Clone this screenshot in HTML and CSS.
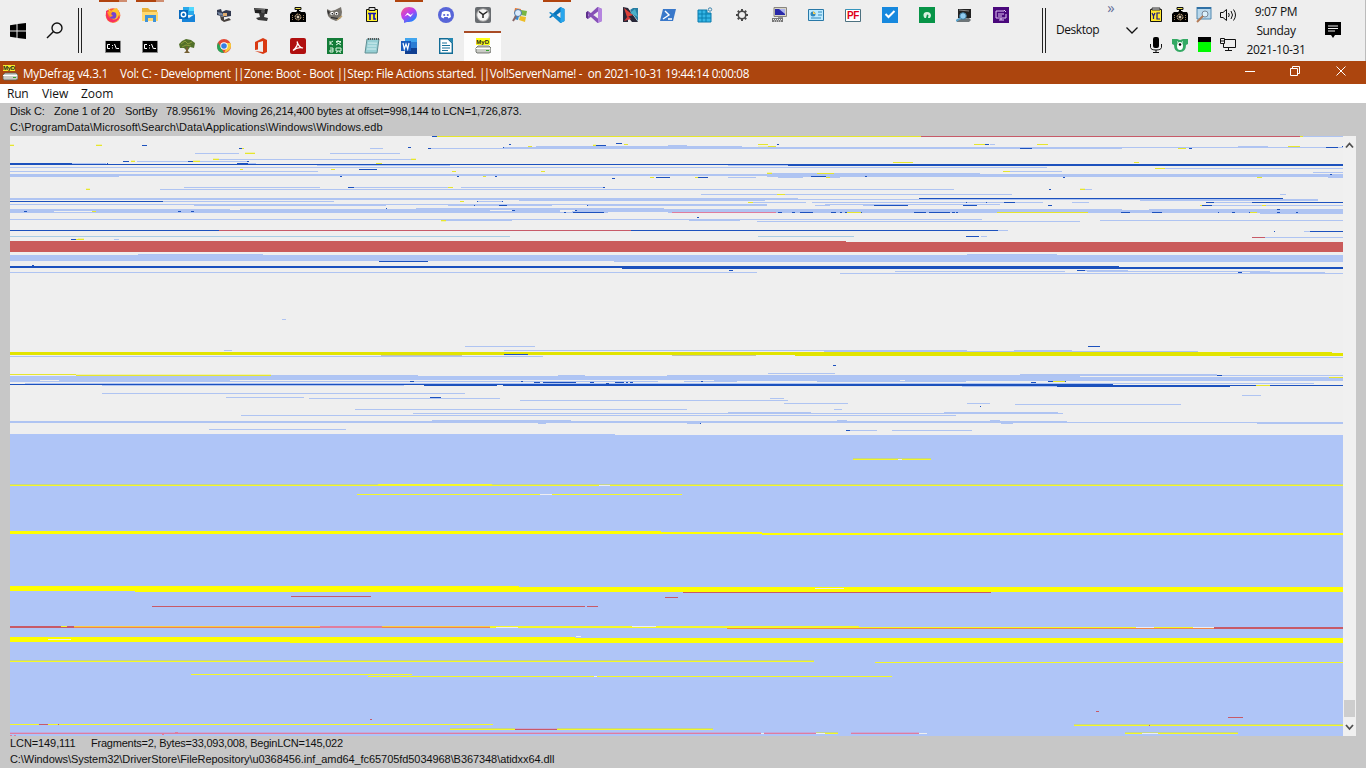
FILE: index.html
```html
<!DOCTYPE html>
<html lang="en">
<head>
<meta charset="utf-8">
<title>MyDefrag v4.3.1</title>
<link rel="stylesheet" href="styles.css">
</head>
<body>
<header class="taskbar">
  <div class="start">
    <svg width="16" height="16" viewBox="0 0 16 16"><path d="M0 2.2 6.5 1.3V7.5H0zM7.5 1.1 16 0V7.5H7.5zM0 8.5H6.5V14.7L0 13.8zM7.5 8.5H16V16L7.5 14.9z"/></svg>
    <svg width="18" height="17" viewBox="0 0 18 17" fill="none" stroke="#111" stroke-width="1.4"><circle cx="11" cy="6" r="5"/><path d="M7.5 9.5 1 16"/></svg>
  </div>
  <div class="grip"></div>
  <div class="apps">
    <div class="row">
      <i class="app run stack"><svg viewBox="0 0 16 16"><circle cx="8" cy="8.5" r="7.3" fill="#ff5a36"/><path d="M3 1 6 4 9 2l3-1 3 6-2 7-5 2" fill="#ffc22d"/><path d="M1 4Q0 14 8 15.5 15 14 14 8 12 14 7 12 1 11 3 3" fill="#f72e62"/><circle cx="8" cy="8.4" r="3.4" fill="#7542d0"/><path d="M2 5 8 4 6 7 8 9 5 10z" fill="#ff9a27"/></svg></i>
      <i class="app run stack"><svg viewBox="0 0 16 16"><path d="M0 1H6L8 3H15V14H0z" fill="#e8b23a"/><path d="M0 5H16V14H0z" fill="#ffd970"/><path d="M3 8H14V15H11V11H6V15H3z" fill="#3f93d8"/></svg></i>
      <i class="app"><svg viewBox="0 0 16 16"><path d="M4 0H15V8H4z" fill="#29a8ea"/><path d="M10 0h5v4h-5z" fill="#50d9ff"/><path d="M3 7 10 11 16 7V15H3z" fill="#1683d9"/><path d="M0 3H9V12H0z" fill="#0869bd"/><circle cx="4.5" cy="7.5" r="2.2" fill="none" stroke="#fff" stroke-width="1.4"/></svg></i>
      <i class="app"><svg viewBox="0 0 16 16"><path d="M1 3 5 2 6 5 10 3 15 4V9L9 10 1 8z" fill="#333a50"/><path d="M1 5 6 6 8 9 3 8z" fill="#7688a4"/><path d="M7 6h4v3H7z" fill="#e0ad70"/><path d="M4 9 8 10v3l5-2 2 2-7 2-3-2z" fill="#47413d"/></svg></i>
      <i class="app"><svg viewBox="0 0 16 16"><path d="M1 1 15 2 14 7 2 6z" fill="#202020"/><path d="m2 2 10 .5" stroke="#777"/><circle cx="10" cy="4.5" r="2" fill="#555"/><path d="M6 6h6l-1 4 4 1-1 3-9-1-2-2 4-1z" fill="#383838"/></svg></i>
      <i class="app"><svg viewBox="0 0 16 16"><use href="#cam"/></svg></i>
      <i class="app"><svg viewBox="0 0 16 16"><path d="M0 2 4 4 8 3 14 0 15 5 14 11 9 14 4 12 1 9z" fill="#77736c"/><path d="M0 3 3 5 1 8z" fill="#333"/><circle cx="5" cy="6.500" r="1.700" fill="#fff"/><circle cx="9.500" cy="6.500" r="1.700" fill="#fff"/><circle cx="5.3" cy="6.7" r=".8"/><circle cx="9.500" cy="6.7" r=".8"/><path d="m4 10.500 7 1" stroke="#222"/><path d="m10 13 5-4" stroke="#c2a46b" stroke-width="1.5"/></svg></i>
      <i class="app"><svg viewBox="0 0 16 16"><path d="M2.500 2.500H13.500V14.500H2.500z" fill="#fff32f" stroke="#111"/><path d="M5 .5h6v3H5z" fill="#ddd" stroke="#111"/><path d="M4 6.5h8M6 7v6M10 7v5h2" fill="none" stroke="#1616b7" stroke-width="1.7"/></svg></i>
      <i class="app run"><svg viewBox="0 0 16 16"><defs><linearGradient id="m" x2=".7" y2="1"><stop stop-color="#ff5a80"/><stop offset=".5" stop-color="#bb3df0"/><stop offset="1" stop-color="#0a8cff"/></linearGradient></defs><path d="M8 0C3 0 0 3.5 0 7.6Q0 11 3 13.5V16L6 14.9C11 16 16 12.5 16 7.6S12.5 0 8 0" fill="url(#m)"/><path d="m3.5 9.5 3-3.7 3 2.3 3-2-3 4-3-2.4z" fill="#fff"/></svg></i>
      <i class="app"><svg viewBox="0 0 16 16"><circle cx="8" cy="8" r="8" fill="#5865d8"/><path d="M4 5Q8 3 12 5l1 5-2.5 1.5L9.6 10H6.4l-.9 1.5L3 10z" fill="#fff"/><circle cx="6.2" cy="8" r="1.1" fill="#5865d8"/><circle cx="9.8" cy="8" r="1.1" fill="#5865d8"/></svg></i>
      <i class="app"><svg viewBox="0 0 16 16"><rect width="16" height="16" rx="2" fill="#686c70"/><circle cx="8" cy="8" r="6.3" fill="#f5f5f5" stroke="#999"/><path d="m4 4.500 4 3L12.500 4.500M8 8v3" fill="none" stroke="#222" stroke-width="1.5"/></svg></i>
      <i class="app"><svg viewBox="0 0 16 16"><path d="m3 1 6 1-1 5-6-1z" fill="#e87732"/><path d="m9 3 6 1-1 5-5-1z" fill="#78b543"/><path d="m8 9 6 1-1 5-6-2z" fill="#edbd25"/><path d="m3 8 4 1-1 4-4-1z" fill="#3688cf"/><circle cx="6" cy="6" r="3.500" fill="#dbeafa" stroke="#487bae"/><path d="m4 9-3 5" stroke="#866" stroke-width="2"/></svg></i>
      <i class="app run"><svg viewBox="0 0 16 16"><path d="m11.5 0 4 2v12l-4 2L4 9.2 1.5 11 0 10.2 10 1z" fill="#0873b9"/><path d="M0 5.7 1.5 5 15 14l-3.5 2L4 9z" fill="#168bd0"/><path d="m11.5 0 4 2v12l-4 2z" fill="#28a6ed"/><path d="M11.5 5 7.5 8l4 3z" fill="#eee"/></svg></i>
      <i class="app"><svg viewBox="0 0 16 16"><path d="M11.5 0 16 2v12l-4.5 2L0 5.5 2 4 12 11.5V4.5L2 12 0 10.5z" fill="#8651b7"/><path d="M0 5.5 2 4v8l-2-1.5z" fill="#5d308b"/><path d="M12 0 16 2v12l-4 2z" fill="#b584df"/></svg></i>
      <i class="app"><svg viewBox="0 0 16 16"><path d="M0 0 5 1 15 15H9L5 10v5H0z" fill="#282738"/><path d="m1 1 9 7-6 2z" fill="#dd4139"/><path d="m7 3 3-2h5v13L9 6z" fill="#267da3"/><path d="m1 14 4-5 3 3z" fill="#cf3738"/><path d="m7 6 5-4 3 8z" fill="#4ab0c8"/></svg></i>
      <i class="app"><svg viewBox="0 0 16 16"><path d="M3 2H16L13 14H0z" fill="#3978ca"/><path d="m5 4 4 4-6 4M8 12h4" fill="none" stroke="#fff" stroke-width="1.4"/></svg></i>
      <i class="app"><svg viewBox="0 0 16 16"><path d="M1 3H10V6H14V15H1z" fill="#35b5e5" stroke="#0879ab"/><path d="M5 3V15M9 3V15M1 7H14M1 11H14" stroke="#087eaf"/><circle cx="13" cy="2.5" r="1.7" fill="#eee" stroke="#3e85ad"/></svg></i>
      <i class="app"><svg viewBox="0 0 16 16" fill="none" stroke="#484848"><circle cx="8" cy="8" r="3.8" stroke-width="1.6"/><path d="M8 2v2M8 12v2M2 8h2M12 8h2M3.8 3.8l1.4 1.4M10.8 10.8l1.4 1.4M3.8 12.2l1.4-1.4M10.8 5.2l1.4-1.4" stroke-width="2"/></svg></i>
      <i class="app"><svg viewBox="0 0 16 16"><path d="M3 .5H15.500V9.500H3z" fill="#d8d5c7" stroke="#88857f"/><path d="M4 2h10v6H4z" fill="#2828a8"/><path d="m8 2 6 5V2z" fill="#aab2ed"/><path d="M7 10h5v2H7z" fill="#999"/><path d="M1 11h11v4H1z" fill="#777"/><path d="M2 12.500h9M3 14h8" stroke="#eee" stroke-dasharray="1"/></svg></i>
      <i class="app"><svg viewBox="0 0 16 16"><path d="M.5 2.5H15.5V13.5H.5z" fill="#bdeaff" stroke="#2878a7"/><circle cx="5" cy="7" r="2.5" fill="#3188ba"/><path d="M5 4v3h3" fill="#ffd052"/><path d="M10 5h4M10 8h4M3 11h10" stroke="#3289bb"/></svg></i>
      <i class="app"><svg viewBox="0 0 16 16"><path d="M.5 2.500H15.5V14.5H.5z" fill="#fff" stroke="#4d7180"/><path d="M1 2.500h14" stroke="#3595bd"/><text x="2" y="12.3" class="pf">PF</text></svg></i>
      <i class="app"><svg viewBox="0 0 16 16"><path d="M0 0h16v16H0z" fill="#1688de"/><path d="m3.5 7 3 3 6-6" fill="none" stroke="#fff" stroke-width="2"/></svg></i>
      <i class="app"><svg viewBox="0 0 16 16"><path d="M0 0h16v16H0z" fill="#079447"/><path d="M4.500 9Q4 5 8 5t4 4l-1 2H9l.5-3-1.500-.5L7 11H5.500z" fill="#d7f1df"/></svg></i>
      <i class="app"><svg viewBox="0 0 16 16"><path d="M2 2H15V11H2z" fill="#222"/><path d="m3 3 10 1" stroke="#888"/><path d="m1 12 12-1 2 2-2 2H1z" fill="#6e7578"/><circle cx="7" cy="9" r="3.3" fill="#91ccf0" stroke="#3b7599"/><path d="m0 14 5-3" stroke="#58a4ce" stroke-width="2"/></svg></i>
      <i class="app"><svg viewBox="0 0 16 16"><path d="M0 0h16v16H0z" fill="#4a087c"/><path d="M3 4h8M3 4v7h10V7M6 13h5M8 11v2M5 7h6M5 9h4M11 3l2 2" fill="none" stroke="#e1c5f3"/></svg></i>
    </div>
    <div class="row">
      <i class="app"><svg viewBox="0 0 16 16"><use href="#cmd"/></svg></i>
      <i class="app"><svg viewBox="0 0 16 16"><use href="#cmd"/></svg></i>
      <i class="app"><svg viewBox="0 0 16 16"><path d="M0 6 3 3 7 1 12 2 16 5 15 10 11 9 9 12H7L5 10 1 10z" fill="#52702a"/><path d="m2 6 4-3 3 3 4-2M3 9l4-2 5 1" stroke="#8b9b3c" fill="none"/><path d="M7 9h2v4l2 2H5l2-2z" fill="#756035"/></svg></i>
      <i class="app"><svg viewBox="0 0 16 16"><circle cx="8" cy="8" r="7" fill="#e34a36"/><path d="M2 4.5 8 15Q1 15 1 8z" fill="#27a557"/><path d="M8 5h6.5Q17 12 8 15l3-6z" fill="#f8cc38"/><circle cx="8" cy="8" r="3.7" fill="#fff"/><circle cx="8" cy="8" r="2.8" fill="#367fe5"/></svg></i>
      <i class="app"><svg viewBox="0 0 16 16"><path d="m2 4 8-4 4 2v12l-4 2-8-3 8 1V3L5 4.5v7L2 12z" fill="#d93912"/></svg></i>
      <i class="app"><svg viewBox="0 0 16 16"><rect width="16" height="16" rx="2" fill="#b00f0f"/><path d="M3 12.5Q9 7 7 3.5 9.2 10 13 10 7.5 8.5 3 12.5z" fill="none" stroke="#fff" stroke-width="1.2"/></svg></i>
      <i class="app"><svg viewBox="0 0 16 16"><path d="M0 0h16v16H0z" fill="#137c38"/><path d="M3 3v4M3 5l3-2M3 5l3 2M9 3.500h5M11 2v2M9 7l5-3M9 4l5 3M3 10h3v4H3v-2h3M9 10h5v3H9zM9 14.500l2-1M14 14.500l-2-1" fill="none" stroke="#dcf4e0"/></svg></i>
      <i class="app"><svg viewBox="0 0 16 16"><path d="M3 1H15L13 15H1z" fill="#97cfd4" stroke="#608f93"/><path d="m4 5 9 .2M3.5 8h9M3 11h9" stroke="#d5f0f1"/><path d="M4 1h11" stroke="#555" stroke-width="2" stroke-dasharray="1"/></svg></i>
      <i class="app"><svg viewBox="0 0 16 16"><path d="M4 0h12v16H4z" fill="#2b7cd3"/><path d="M4 0h12v4H4z" fill="#41a5ee"/><path d="M4 10h12v6H4z" fill="#103f91"/><path d="M0 3h10v10H0z" fill="#185abd"/><path d="m2 5 1.3 6L5 6l1.7 5L8 5" fill="none" stroke="#fff" stroke-width="1.2"/></svg></i>
      <i class="app"><svg viewBox="0 0 16 16"><path d="M1.7.7H10L14.3 5v10.3H1.7z" fill="#fff" stroke="#126c96" stroke-width="1.4"/><path d="M10 0h5v5z" fill="#2387b2"/><path d="M4 5h5M4 7.5h8M4 10h8M4 12.5h6" stroke="#187198"/></svg></i>
      <i class="app active"><svg viewBox="0 0 16 16"><path d="M1 0h14v7H1z" fill="#ffff19"/><text x="1.300" y="5.800" class="mydt">MyD</text><use href="#drive"/></svg></i>
    </div>
  </div>
  <div class="grip"></div>
  <div class="desk"><span>Desktop</span><b>»</b></div>
  <svg class="chev" viewBox="0 0 12 7" fill="none" stroke="#111" stroke-width="1.3"><path d="m.5.5 5.5 5.5 5.5-5.5"/></svg>
  <div class="tray">
    <svg viewBox="0 0 16 16"><path d="M2.500 2.500H13.500V14.500H2.500z" fill="#ffe72f" stroke="#111"/><path d="M4 1h8v2H4z" fill="#ddd" stroke="#333"/><path d="m4 6 1.5 3L7 6M5.500 9v3M12 6H9v6h3" fill="none" stroke="#191987" stroke-width="1.2"/></svg>
    <svg viewBox="0 0 16 16"><use href="#cam"/></svg>
    <svg viewBox="0 0 16 16"><path d="M1 0h14v12H1z" fill="#b9d8ec" stroke="#5188af"/><path d="M1 1h14" stroke="#2f70a5" stroke-width="2"/><circle cx="9" cy="7" r="3" fill="#dbf0fb" stroke="#789"/><path d="m7 9-6 6" stroke="#b37a55" stroke-width="2"/></svg>
    <svg viewBox="0 0 16 16" fill="none" stroke="#111"><path d="M.5 5.500H3l3.500-3v11L3 10.500H.5zM8.500 6q1.500 2 0 4M11 4q3 4 0 8M13.500 2.500q4 5.500 0 11"/></svg>
    <svg viewBox="0 0 16 16"><rect x="5" width="6" height="11" rx="2"/><path d="M2.500 7v3.500Q3 13 8 13t5.500-2.500V7M8 13v3M5 15.500h6" fill="none" stroke="#111"/></svg>
    <svg viewBox="0 0 16 16"><path d="M0 2h5l3 1 3-1h5v5l-2 1q0 7-6 7T2 8L0 7z" fill="#33a963"/><ellipse cx="8" cy="9" rx="3" ry="4" fill="#fff"/><circle cx="8" cy="7.500" r="1.300"/><path d="M5 5h1M10 5h1" stroke="#fff"/></svg>
    <svg viewBox="0 0 16 16"><path d="M2 0h13v5H2z"/><path d="M2 5h13v10H2z" fill="#00f800"/></svg>
    <svg viewBox="0 0 16 16" fill="none" stroke="#111"><path d="M5 2.500h10.500v8H3.500V7M.5 1.500h4v5h-4zM1 4h3M8.500 11v2.500M5 13.500h7"/></svg>
  </div>
  <div class="clock"><span>9:07 PM</span><span>Sunday</span><span>2021-10-31</span></div>
  <svg class="note" viewBox="0 0 16 16"><path d="M0 0h16v13h-6l-2 3-2-3H0z"/><path d="M3 4h10M3 6.500h10M3 9h7" stroke="#eee"/></svg>
</header>

<div class="title">
  <svg class="logo" viewBox="0 0 16 16"><path d="M1 0h12v6H1z" fill="#f4ea2b"/><text x="1" y="5.300" class="mydt">MyD</text><use href="#drive"/></svg>
  <span class="t1">MyDefrag v4.3.1</span><span class="t2">Vol: C: - Development <span class="bars">||</span>Zone: Boot - Boot <span class="bars">||</span>Step: File Actions started. <span class="bars">||</span>Vol!ServerName! -&nbsp; on 2021-10-31 19:44:14 0:00:08</span>
  <svg class="winbtns" viewBox="0 0 102 12" fill="none" stroke="#fff"><path d="M0 6.500h10M45.500 3.500h7v7h-7zM47.500 3V1.500h7v7H53M91.500 1.500l9 9M100.500 1.500l-9 9"/></svg>
</div>
<nav class="menu"><span class="m1">Run</span><span class="m2">View</span><span class="m3">Zoom</span></nav>

<main class="body">
  <div class="info">
    <p class="line"><span class="i1">Disk C:</span><span class="i2">Zone 1 of 20</span><span class="i3">SortBy</span><span class="i4">78.9561%</span><span class="i5">Moving 26,214,400 bytes at offset=998,144 to LCN=1,726,873.</span></p>
    <p class="line path">C:\ProgramData\Microsoft\Search\Data\Applications\Windows\Windows.edb</p>
  </div>
  <div class="view">
    <svg class="map" viewBox="10 136 1333 600" shape-rendering="crispEdges">
      <path class="pale" d="M10 144h4M96 144h6M593 144h3M758 146h10M245 152h10M131 160h4M193 160h7M213 158h6M411 158h5M10 374h261M78 238h6M767 172h5M86 188h4M1080 188h5M441 221h5"/>
      <path class="l" d="M1303 136h40M503 147h840M430 148h692M370 148h13M536 146h206M668 145h19M1238 146h30M990 144h5M195 153h44M330 153h70M219 159h192M137 161h51M200 161h47M72 163h34M248 163h8M317 165h133M728 165h60M10 167h1037M10 171h308M1010 171h52M1165 168h178M1313 172h30M767 173h213M10 174h1333M10 175h1333M10 176h109M767 176h576M1328 177h15M728 177h28M778 177h25M830 177h10M184 187h136M354 187h94M461 187h144M160 189h794M1085 189h7M701 194h76M785 194h227M1280 194h6M10 198h788M10 199h835M519 200h246M798 199h520M1140 200h178M163 201h171M478 201h24M752 202h54M812 202h231M1072 202h17M1214 202h38M10 204h757M825 204h175M194 205h192M448 205h104M587 205h180M815 205h15M863 205h13M1212 205h131M416 208h248M10 209h220M240 209h882M1149 209h194M10 210h1333M10 211h44M92 211h1251M10 212h1333M1260 213h83M10 219h972M445 220h67M689 220h51M1100 220h243M757 221h323M998 230h10M1304 231h6M981 236h6M1265 237h78M114 239h5M138 254h125M967 254h90M614 261h729M10 272h747M840 273h503M895 271h170M1087 271h183M1085 270h43M1250 272h75"/>
      <path class="band" d="M10 255h1333v6H10z"/>
      <path class="c" d="M10 236h500M758 236h96"/>
      <path class="b" d="M142 145h5M408 147h3M239 148h3M428 148h3M123 161h6M188 161h5M247 161h2M107 163h1M237 163h11M10 163h62M10 164h1333M788 165h555M359 169h18M340 176h2M457 176h2M495 176h2M811 176h15M865 176h2M656 177h14M697 177h11M612 178h3M1063 177h2M1330 174h2M348 187h6M603 187h2M1049 189h2M10 201h153M919 198h364M477 201h1M502 201h1M474 205h1M499 205h8M587 205h1M874 205h34M963 205h14M1048 205h4M1202 205h10M966 202h1M986 202h1M1004 202h11M1206 202h8M1252 202h91M386 208h1M24 211h3M178 211h3M191 211h3M512 210h3M575 210h2M564 212h2M573 212h31M778 212h4M792 212h3M800 212h13M831 212h5M840 212h2M845 212h2M861 212h1M914 212h12M929 212h21M952 212h3M956 212h2M1121 212h9M1152 212h10M1218 212h1M1232 212h3M1249 212h1M1277 209h3M1277 212h3M1296 212h2M697 217h2M10 230h209M631 230h367M1310 231h33M1274 231h1M966 236h13M71 239h5M134 251h4M379 261h49M32 265h2M10 266h1109M10 267h1333M622 268h721M729 270h4M1077 270h8M1238 272h4M985 144h4M509 144h2M616 143h6M596 145h10M503 147h1M777 144h2M1020 148h12M1189 148h3M1326 147h12M1342 146h1M432 136h5"/>
      <path class="y" d="M437 136h484M1300 136h3M10 145h4M96 145h6M593 145h3M624 144h4M758 144h10M768 146h8M528 146h4M974 144h11M1037 144h11M1178 148h8M1288 146h12M242 148h2M245 153h10M213 159h6M411 159h5M131 161h4M193 161h7M376 163h6M893 162h20M1134 162h5M1155 168h10M240 169h3M331 169h4M452 171h4M541 171h4M1003 171h7M767 173h5M817 173h17M483 176h3M650 177h4M695 177h3M826 177h4M1257 177h5M86 189h4M448 187h5M1080 189h5M777 194h8M460 201h4M748 202h5M1200 205h2M1262 205h4M92 211h4M847 212h14M997 212h91M1250 212h7M441 220h5M76 239h8"/>
      <path class="w" d="M54 211h38M230 209h10M490 210h22M560 210h15M560 211h12M608 212h60"/>
      <path class="r" d="M921 136h379M219 230h412M1252 237h13"/><path class="p" d="M672 212h104"/>
      <path class="redband" d="M10 241h836v1h497v10H10z"/>
      <path class="l" d="M282 319h4M465 346h70M224 350h8M504 350h463M1014 350h58M824 351h374M10 356h533M1230 357h113M768 373h67M1020 374h197M271 375h147M558 375h27M667 375h676M10 381h1333M10 383h1333M102 385h302M962 386h95M102 393h363M226 397h78M309 398h191M520 400h268M770 398h14M784 403h64M355 409h332M834 409h8M728 412h83M944 412h114M413 413h650M241 415h715M967 403h23M1015 404h166M1242 395h19M10 421h1057M10 422h1333M432 420h139M837 420h10M990 420h10M538 423h8M687 423h13M1001 423h12M1257 423h86M850 430h27M892 430h80M209 429h137"/>
      <path class="band" d="M10 376h1333v5H10z"/>
      <path class="w" d="M40 380h19M230 380h484M900 380h5M966 381h377M1080 376h263M136 382h354M658 381h26M737 381h80M10 383h15M1314 383h29"/>
      <path class="olive" d="M10 352h1322v1h11v3H795v-1H10z"/><path class="g" d="M381 355h81M672 355h84"/>
      <path class="b" d="M1088 346h12M504 354h24M833 365h3M1217 375h5M10 384h1103M424 385h73M503 385h840M1057 386h173M410 381h4M521 381h2M534 382h6M543 382h33M590 382h4M606 383h3M615 382h9M626 382h2M630 382h3M701 381h2M1031 382h5M1048 381h5M1065 381h1M430 397h11M980 406h1M700 423h1M846 430h4"/>
      <path class="y" d="M10 374h66M76 375h195M1329 377h14M1053 381h12M1256 385h14"/>
      <path class="base" d="M10 434h605v1h728v301H10z"/>
      <path class="fringe" d="M853 458h78M10 484h1333M10 660h804M450 728h65M557 728h156M1074 724h269M816 732h22M1125 732h113"/>
      <path class="fringe pinkish" d="M10 732h751M764 732h52M851 732h68M515 728h42"/>
      <path class="y bright" d="M853 459h78M10 485h1333M378 484h114M357 494h325M490 626h369M490 627h703M61 626h6M10 661h804M875 662h468M191 674h221M368 676h524M10 724h483M1074 725h269M450 729h65M557 729h156M816 733h22M1125 733h113"/>
      <path class="bright-fill" d="M10 531h651v1h101v1h581v2H762v-1H10zM10 586h509v1h824v5H135v-1H10zM10 637h565v1h768v5H290v-1H10z"/>
      <path class="gold" d="M74 626h246M382 626h108"/>
      <path class="o" d="M74 627h246M382 627h108M727 628h487"/>
      <path class="r" d="M683 592h308M291 596h80M665 597h13M152 606h433M587 606h11M10 626h51M67 626h7M10 627h64M1214 627h129M1214 628h129M370 719h2M39 724h9M58 724h1M1096 711h3M1228 717h15M1149 725h1M515 729h42"/>
      <path class="p" d="M320 626h62M320 627h62M10 733h751M764 733h52M851 733h68M10 735h2M14 735h2M162 734h2M175 732h3"/>
      <path class="w" d="M898 459h4M599 485h11M540 494h12M815 588h29M496 627h22M632 626h24M1136 627h18M1193 627h21M48 639h23M576 636h5M761 733h3M816 733h9M919 733h8M1142 733h16M594 676h3"/>
    </svg>
    <div class="scroll">
      <svg viewBox="0 0 13 14"><path d="m3 9.500 3.500-4L10 9.500" fill="none" stroke="#505050" stroke-width="1.800"/></svg>
      <div class="thumb"></div>
      <svg viewBox="0 0 13 14"><path d="m3 5 3.500 4L10 5" fill="none" stroke="#505050" stroke-width="1.800"/></svg>
    </div>
  </div>
  <footer class="info foot">
    <p class="line"><span class="f1">LCN=149,111</span><span class="f2">Fragments=2, Bytes=33,093,008, BeginLCN=145,022</span></p>
    <p class="line path2">C:\Windows\System32\DriverStore\FileRepository\u0368456.inf_amd64_fc65705fd5034968\B367348\atidxx64.dll</p>
  </footer>
</main>

<svg class="defs">
  <symbol id="cam" viewBox="0 0 16 16"><path d="M5 .5h6v2H5z" fill="#eee34c" stroke="#111"/><path d="M7 3h2v2H7zM0 7 2 5h4l1-1h3l1 1h4l1 2v8H0z"/><circle cx="8" cy="10" r="3" fill="#37322a" stroke="#c8a779" stroke-dasharray="2 1"/><circle cx="8" cy="10" r="1.200" fill="#dac9b0"/><path d="M2.500 8v5M13.500 8v5" stroke="#987c58" stroke-dasharray="1"/></symbol>
  <symbol id="cmd" viewBox="0 0 16 16"><path d="M.5 2.500h15v12H.5z" stroke="#888"/><path d="M0 2.500h16" stroke="#d9d9d9"/><path d="M5 6.500H2.500v4H5M7.500 7v1M7.500 9.500v1M9.500 6l2 5M12 10.500h2" fill="none" stroke="#fff"/></symbol>
  <symbol id="drive" viewBox="0 0 16 16"><path d="m1 10 2-2h11l2 2v4l-2 1H2l-1-1z" fill="#c9cbc5" stroke="#5c5e59" stroke-width=".8"/><path d="M1 10.500h14" stroke="#fff"/><path d="M11 12.500h3" stroke="#35a52f"/></symbol>
</svg>
</body>
</html>
```
FILE: styles.css
```css
* { box-sizing: border-box; }
body { margin: 0; width: 1366px; height: 768px; overflow: hidden; display: flex; flex-direction: column; font: 12px "Open Sans", "Noto Sans", sans-serif; color: #111; background: #c7c7c7; }
svg { display: block; flex: none; }
.defs { width: 0; height: 0; position: absolute; }
.taskbar { height: 61px; flex: none; display: flex; background: #eeeeee; border-right: 1px solid #bbb; padding-left: 10px; }
.start { width: 68px; flex: none; display: flex; gap: 20px; align-items: center; }
.grip { width: 4px; height: 45px; margin-top: 8px; border: solid #222; border-width: 0 1px; flex: none; }
.apps { width: 961px; padding-left: 12px; flex: none; margin-right: -1px; }
.row { display: flex; height: 31px; }
.row + .row { height: 30px; }
.app { width: 37px; display: flex; align-items: center; justify-content: center; border-top: 2px solid transparent; background-clip: padding-box; padding-bottom: 3px; }
.row + .row .app { padding-bottom: 2px; }
.app svg { width: 16px; height: 16px; }
.app.run { border-image: linear-gradient(to right, transparent 5px, #b1440e 5px, #b1440e 33px, transparent 33px) 2 0 0; }
.app.stack { border-image: linear-gradient(to right, transparent 5px, #b1440e 5px, #b1440e 25px, #cf8d70 25px, #cf8d70 33px, transparent 33px) 2 0 0; }
.app.active { background: #fdfdfd; border-top-color: #a94b25; }
.pf { font: bold 10px "Liberation Sans", sans-serif; fill: #e00018; letter-spacing: -.3px; }
.mydt { font: bold 6px "Liberation Sans", sans-serif; fill: #222; }
.desk { width: 68px; flex: none; padding: 0 0 0 10px; display: flex; align-items: flex-start; font-size: 12px; letter-spacing: -.45px; }
.desk span { line-height: 16px; margin-top: 22px; }
.desk b { margin-left: 8px; font: 13px/18px "Open Sans", sans-serif; height: 18px; margin-top: -2px; color: #667099; font-size: 15px; }
.chev { width: 12px; height: 7px; margin: 27px 11px 0 12px; }
.tray { width: 90px; flex: none; display: grid; grid-template-columns: repeat(4, 16px); grid-template-rows: 16px 16px; gap: 14px 8px; padding-top: 7px; margin-left: -1px; }
.tray svg { width: 16px; height: 16px; }
.clock { width: 76px; flex: none; text-align: center; line-height: 19px; padding-top: 2px; display: flex; flex-direction: column; white-space: nowrap; letter-spacing: -.35px; }
.note { width: 16px; height: 16px; margin: 22px 0 0 11px; }
.title { height: 23px; flex: none; background: #ac450e; color: #fff; display: flex; align-items: center; padding-left: 2px; white-space: nowrap; font-size: 11.7px; letter-spacing: -.29px; }
.bars { letter-spacing: -1.6px; margin-right: 1px; }
.logo { width: 16px; height: 16px; margin-right: 5px; }
.t1 { width: 97px; flex: none; letter-spacing: -.2px; }
.t2 { width: 1125px; flex: none; }
.winbtns { width: 102px; height: 12px; margin-top: -3px; }
.menu { height: 19px; flex: none; background: #fff; display: flex; align-items: center; padding-left: 7px; }
.m1 { width: 35px; letter-spacing: -.2px; } .m2 { width: 39px; }
.body { height: 665px; flex: none; background: #c7c7c7; padding: 1px 10px 0; }
.info { font: 11px "Liberation Sans", Arial, sans-serif; height: 32px; white-space: nowrap; letter-spacing: -.09px; }
.line { margin: 0; height: 16px; line-height: 15px; display: flex; }
.i1 { width: 44px; } .i2 { width: 71px; } .i3 { width: 41px; } .i4 { width: 57px; }
.i5 { letter-spacing: -.14px; }
.path { letter-spacing: .03px; }
.path2 { letter-spacing: -.07px; }
.f1 { width: 81px; }
.f2 { letter-spacing: -.23px; }
.view { display: flex; height: 600px; }
.map { width: 1333px; height: 600px; background: #efefef; }
.map path { fill: none; stroke-width: 1; transform: translateY(.5px); }
.map .l { stroke: #afc4f2; } .map .c { stroke: #a9cde5; } .map .b { stroke: #1c51bd; }
.map .y { stroke: #e6e62c; } .map .bright { stroke: #f4f827; } .map .r { stroke: #c75a68; }
.map .pale { stroke: #eeeeb4; } .map .fringe { stroke: #c3d48f; } .map .pinkish { stroke: #c3a9dc; }
.map .p { stroke: #df7d9e; } .map .o { stroke: #ee864e; } .map .gold { stroke: #f6cc44; }
.map .g { stroke: #c4c5aa; } .map .w { stroke: #efefef; }
.map .band, .map .base, .map .redband, .map .olive, .map .bright-fill { transform: none; }
.map .band { fill: #afc5f4; } .map .base { fill: #afc5f7; } .map .redband { fill: #ca5b5b; }
.map .olive { fill: #e2e400; } .map .bright-fill { fill: #ff0; }
.scroll { width: 13px; height: 600px; background: #f0f0f0; display: flex; flex-direction: column; justify-content: space-between; padding: 2px 0; }
.scroll svg { width: 13px; height: 14px; }
.thumb { height: 17px; background: #cdcdcd; margin: auto 1px 3px; }
```
